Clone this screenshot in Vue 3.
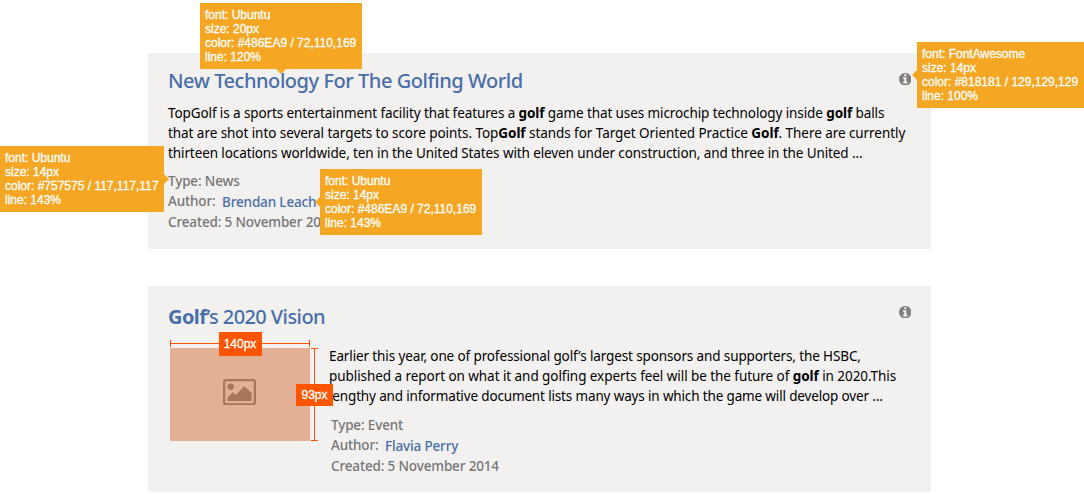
<script setup>
const results = [
  {
    id: 'technology',
    title: [{ text: 'New Technology For The Golfing World' }],
    image: false,
    lines: [
      [{ text: 'TopGolf is a sports entertainment facility that features a ' }, { text: 'golf', hit: true }, { text: ' game that uses microchip technology inside ' }, { text: 'golf', hit: true }, { text: ' balls' }],
      [{ text: 'that are shot into several targets to score points. Top' }, { text: 'Golf', hit: true }, { text: ' stands for Target Oriented Practice ' }, { text: 'Golf', hit: true }, { text: '. There are currently' }],
      [{ text: 'thirteen locations worldwide, ten in the United States with eleven under construction, and three in the United ...' }],
    ],
    type: 'News',
    author: 'Brendan Leach',
    created: '5 November 2014',
  },
  {
    id: 'vision',
    title: [{ text: 'Golf', hit: true }, { text: '’s 2020 Vision' }],
    image: true,
    lines: [
      [{ text: 'Earlier this year, one of professional golf’s largest sponsors and supporters, the HSBC,' }],
      [{ text: 'published a report on what it and golfing experts feel will be the future of ' }, { text: 'golf', hit: true }, { text: ' in 2020.This' }],
      [{ text: 'lengthy and informative document lists many ways in which the game will develop over ...' }],
    ],
    type: 'Event',
    author: 'Flavia Perry',
    created: '5 November 2014',
  },
]

const notes = [
  { id: 'title', font: 'Ubuntu', size: '20px', color: '#486EA9 / 72,110,169', line: '120%' },
  { id: 'icon', font: 'FontAwesome', size: '14px', color: '#818181 / 129,129,129', line: '100%' },
  { id: 'meta', font: 'Ubuntu', size: '14px', color: '#757575 / 117,117,117', line: '143%' },
  { id: 'author', font: 'Ubuntu', size: '14px', color: '#486EA9 / 72,110,169', line: '143%' },
]
</script>

<template>
  <main class="page">
    <article v-for="r in results" :key="r.id" class="card" :class="r.id">
      <header class="head">
        <h2 class="title"><span v-for="(p, i) in r.title" :key="i" :class="{ hit: p.hit }">{{ p.text }}</span></h2>
        <svg class="info" viewBox="0 128 1536 1536">
          <path d="M1024 1376v-160q0-14-9-23t-23-9h-96v-512q0-14-9-23t-23-9h-320q-14 0-23 9t-9 23v160q0 14 9 23t23 9h96v320h-96q-14 0-23 9t-9 23v160q0 14 9 23t23 9h448q14 0 23-9t9-23zm-128-896v-160q0-14-9-23t-23-9h-192q-14 0-23 9t-9 23v160q0 14 9 23t23 9h192q14 0 23-9t9-23zm640 416q0 209-103 385.5t-279.5 279.5-385.5 103-385.5-103-279.5-279.5-103-385.5 103-385.5 279.5-279.5 385.5-103 385.5 103 279.5 279.5 103 385.5z" />
        </svg>
      </header>
      <div class="body">
        <div v-if="r.image" class="thumb">
          <svg class="picture" viewBox="0 128 1920 1536">
            <path d="M640 576q0 80-56 136t-136 56-136-56-56-136 56-136 136-56 136 56 56 136zm1024 384v448h-1408v-192l320-320 160 160 512-512zm96-704h-1600q-13 0-22.5 9.5t-9.5 22.5v1216q0 13 9.5 22.5t22.5 9.5h1600q13 0 22.5-9.5t9.5-22.5v-1216q0-13-9.5-22.5t-22.5-9.5zm160 32v1216q0 66-47 113t-113 47h-1600q-66 0-113-47t-47-113v-1216q0-66 47-113t113-47h1600q66 0 113 47t47 113z" />
          </svg>
          <div class="measure across"><span class="size">140px</span></div>
          <div class="measure down"><span class="size">93px</span></div>
        </div>
        <div class="copy">
          <p class="summary">
            <span v-for="(line, i) in r.lines" :key="i" class="line" :class="'line-' + (i + 1)"><span v-for="(p, j) in line" :key="j" :class="{ hit: p.hit }">{{ p.text }}</span></span>
          </p>
          <div class="meta">
            <div class="row type">Type: {{ r.type }}</div>
            <div class="row"><span class="label">Author:</span><a class="link">{{ r.author }}</a></div>
            <div class="row created">Created: {{ r.created }}</div>
          </div>
        </div>
      </div>
    </article>

    <aside v-for="n in notes" :key="n.id" class="note" :class="'note-' + n.id">
      <div>font: {{ n.font }}</div>
      <div>size: {{ n.size }}</div>
      <div>color: {{ n.color }}</div>
      <div>line: {{ n.line }}</div>
    </aside>
  </main>
</template>

<style>
body { background: #fff; }
</style>

<style scoped>
.page {
  position: relative;
  box-sizing: border-box;
  width: 1084px;
  height: 494px;
  padding: 53px 153px 2px 148px;
  display: flex;
  flex-direction: column;
  gap: 37px;
  overflow: hidden;
  font-family: "Noto Sans", "Open Sans", sans-serif;
}
.card {
  box-sizing: border-box;
  height: 196px;
  padding: 16px 20px 0;
  background: #f3f1f0;
}
.card.vision { height: 206px; padding-top: 19px; }
.head { display: flex; justify-content: space-between; align-items: flex-start; height: 24px; }
.title {
  margin: 0;
  font-size: 20px;
  line-height: 24px;
  font-weight: 500;
  color: #486ea9;
  white-space: nowrap;
  letter-spacing: -0.45px;
}
.vision .title { letter-spacing: -0.57px; }
.hit { font-weight: 700; }
.info { width: 12.5px; height: 12.5px; margin-top: 3.5px; fill: #818181; }
.vision .info { margin-top: 0.5px; }
.body { display: flex; margin-top: 10px; }
.vision .body { margin-top: 18px; }
.summary { margin: 0; font-size: 13.5px; line-height: 20px; color: #000; }
.line { display: block; white-space: nowrap; }
.technology .line-1 { letter-spacing: -0.1px; }
.technology .line-2 { letter-spacing: -0.06px; }
.technology .line-3 { letter-spacing: -0.1px; }
.vision .line-1 { letter-spacing: -0.12px; }
.vision .line-2 { letter-spacing: -0.06px; }
.vision .line-3 { letter-spacing: -0.15px; }
.meta { margin-top: 8px; font-size: 13.5px; font-weight: 500; line-height: 20.5px; color: #757575; }
.row { display: flex; height: 20.5px; white-space: nowrap; letter-spacing: -0.15px; }
.label { width: 54px; margin-top: -1px; }
.link { color: #486ea9; }
.vision .meta { margin-left: 2px; margin-top: 9px; }

.thumb {
  position: relative;
  display: flex;
  align-items: center;
  justify-content: center;
  width: 140px;
  height: 93px;
  margin: 1px 19px 0 2px;
  background: #e3af95;
}
.vision .copy { margin-top: -1px; }
.picture { width: 33px; height: 26.4px; margin: 0 1px 5px 0; fill: #a9755b; }

.measure {
  position: absolute;
  display: flex;
  align-items: center;
  justify-content: center;
  box-sizing: border-box;
}
.measure::before { content: ""; position: absolute; background: #ff5500; }
.across { left: 0; top: -8px; width: 140px; height: 7px; border: solid #ff5500; border-width: 0 1px; }
.across::before { left: 0; right: 0; top: 3px; height: 1px; }
.down { left: 141px; top: 0; width: 7px; height: 93px; border: solid #ff5500; border-width: 1px 0; }
.down::before { top: 0; bottom: 0; left: 3px; width: 1px; }
.size {
  position: relative;
  flex: none;
  width: 43px;
  height: 24px;
  text-align: center;
  background: #ff5500;
  color: #fff;
  font: 12px/24px "Liberation Sans", Arial, sans-serif;
  -webkit-text-stroke: 0.3px #fff;
}
.down .size { width: 37px; height: 22px; line-height: 22px; }

.note {
  position: absolute;
  box-sizing: border-box;
  width: 162px;
  height: 66px;
  padding: 5px;
  background: #f5a623;
  color: #fff;
  font: 12px/14px "Liberation Sans", Arial, sans-serif;
  white-space: nowrap;
  -webkit-text-stroke: 0.3px #fff;
}
.note::after { content: ""; position: absolute; border: 5px solid transparent; }
.note-title { left: 200px; top: 3px; }
.note-title::after { left: 76px; top: 66px; border-top-color: #f5a623; border-bottom: 0; }
.note-icon { left: 917px; top: 42px; width: 167px; }
.note-icon::after { left: -5px; top: 28px; border-right-color: #f5a623; border-left: 0; }
.note-meta { left: 0; top: 146px; width: 164px; }
.note-meta::after { left: 164px; top: 28px; border-left-color: #f5a623; border-right: 0; }
.note-author { left: 320px; top: 169px; }
.note-author::after { left: -5px; top: 28px; border-right-color: #f5a623; border-left: 0; }
</style>
